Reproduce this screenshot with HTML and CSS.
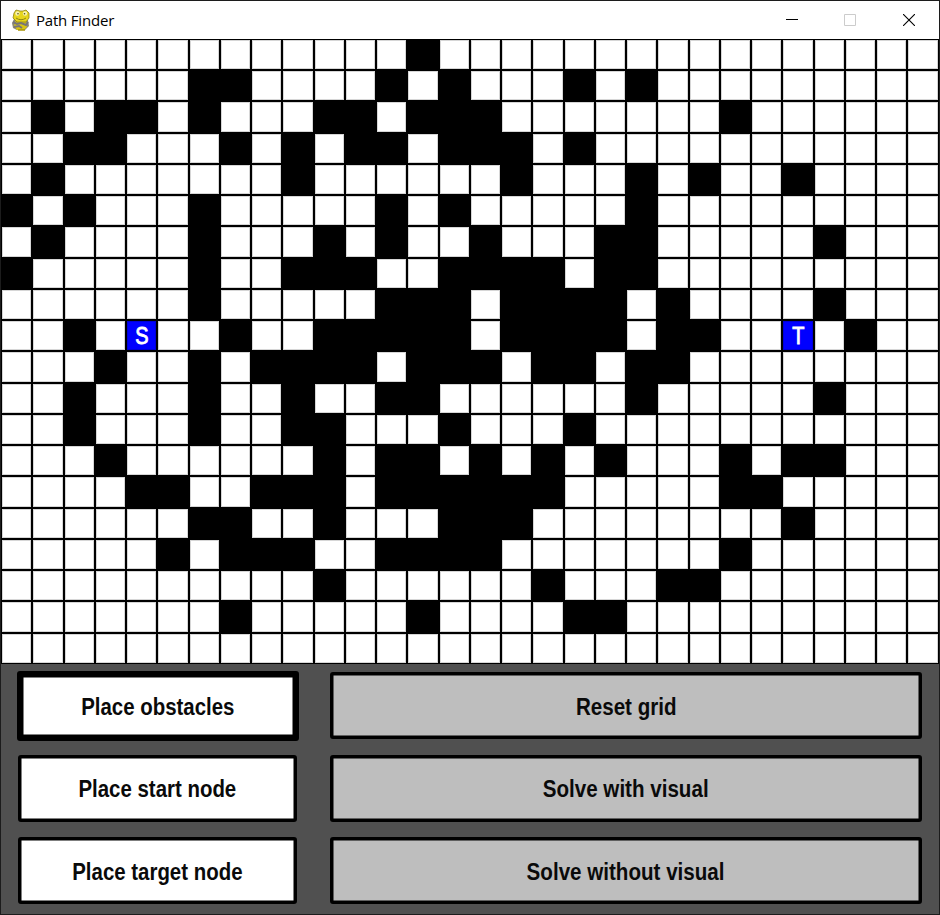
FILE: index.html
```
<!DOCTYPE html>
<html lang="en">
<head>
<meta charset="utf-8">
<title>Path Finder</title>
<link rel="stylesheet" href="styles.css">
</head>
<body>
<div class="window">
  <header class="titlebar">
    <svg class="logo" viewBox="0 0 20 22" width="20" height="22">
      <path d="M3 10 1 14l1 5 4 2h8l4-4-1-6z" fill="#8b8878"/>
      <path d="M5 10h10l1 8-3 3H6l-3-4z" fill="#d8c414"/>
      <path d="M3 4 5 1l4 1h3l3-1 3 3v5l-3 4H6L2 9z" fill="#e6d51c" stroke="#8f8418" stroke-width=".8"/>
      <circle cx="6.5" cy="4.5" r="2.2" fill="#f6f2b4"/>
      <circle cx="14" cy="4.5" r="2.2" fill="#f6f2b4"/>
      <circle cx="7" cy="4.8" r=".8" fill="#554d10"/>
      <circle cx="13.5" cy="4.8" r=".8" fill="#554d10"/>
      <path d="M5 9q5 3.500 10 0" fill="none" stroke="#8f8418"/>
      <path d="M2 13l4 2 4-1 5 2 2-3M3 18l5-1 3 2" fill="none" stroke="#77757a" stroke-width="2"/>
      <path d="M7 21h7" stroke="#a89306" stroke-width="1.500"/>
    </svg>
    <h1 class="title">Path Finder</h1>
    <div class="controls">
      <svg viewBox="0 0 12 12" width="12" height="12"><path d="M0 5.500h12" stroke="#000"/></svg>
      <svg viewBox="0 0 12 12" width="12" height="12"><path d="M.5.5h11v11H.5z" fill="none" stroke="#ccc"/></svg>
      <svg viewBox="0 0 12 12" width="12" height="12"><path d="M0 0l12 12M12 0 0 12" stroke="#000" stroke-width="1.100"/></svg>
    </div>
  </header>
  <main class="board" id="board"></main>
  <section class="panel">
    <button class="btn mode selected"><span>Place obstacles</span></button>
    <button class="btn"><span>Reset grid</span></button>
    <button class="btn mode"><span>Place start node</span></button>
    <button class="btn"><span>Solve with visual</span></button>
    <button class="btn mode"><span>Place target node</span></button>
    <button class="btn"><span>Solve without visual</span></button>
  </section>
</div>
<script src="grid.js"></script>
</body>
</html>
```
FILE: styles.css
```
* { box-sizing: border-box; }
body { margin: 0; background: #1c1c1c; }
.window {
  width: 940px;
  height: 915px;
  border: 1px solid #1c1c1c;
  background: #505050;
  overflow: hidden;
}
.titlebar {
  height: 37.9px;
  background: #fff;
  display: flex;
  align-items: center;
  padding: 0 24.5px 0 10px;
}
.logo { display: block; }
.title {
  margin: 0 0 0 5px;
  font: 400 15px/20px "Open Sans", "Noto Sans", sans-serif;
  letter-spacing: -.2px;
  color: #000;
}
.controls {
  margin-left: auto;
  display: flex;
  gap: 46.5px;
}
.controls svg { display: block; }
.board {
  width: 937.5px;
  height: 625px;
  display: grid;
  grid-template-columns: repeat(30, 31.25px);
  grid-template-rows: repeat(20, 31.25px);
  background: #000;
}
.cell {
  background: #fff;
  border: 1px solid #000;
  box-shadow: inset 0 0 0 1px rgba(0, 0, 0, .16);
}
.wall { background: #000; }
.node {
  display: flex;
  align-items: center;
  justify-content: center;
  background: #00f;
  color: #fff;
  font: 400 24px/29px "Liberation Sans", sans-serif;
  -webkit-text-stroke: .9px #fff;
}
.node span { transform: scaleX(.83); }
.panel {
  display: grid;
  grid-template-columns: 279px 592px;
  grid-template-rows: repeat(3, 67px);
  column-gap: 33px;
  row-gap: 15.6px;
  padding: 8.2px 0 0 17px;
}
.btn {
  display: flex;
  align-items: center;
  justify-content: center;
  padding: 0;
  border: 3px solid #000;
  border-radius: 3px;
  background: #bebebe;
  box-shadow: inset 0 0 0 .5px #000;
  color: #0a0a0a;
  font: 700 23px/26px "Liberation Sans", sans-serif;
}
.btn span { transform: translateY(.5px) scaleX(.895); white-space: nowrap; }
.mode { background: #fff; }
.mode span { transform: translate(-.5px, .5px) scaleX(.888); }
.selected { border-width: 6px; margin: -1px -2px -2px -1px; }
```
FILE: grid.js
```
// One string per row: "#" wall, "." free, "S" start, "T" target.
const rows = [
  ".............#................",
  "......##....#.#...#.#.........",
  ".#.##.#...##.###.......#......",
  "..##...#.#.##.###.#...........",
  ".#.......#......#...#.#..#....",
  "#.#...#.....#.#.....#.........",
  ".#....#...#.#..#...##.....#...",
  "#.....#..###..####.##.........",
  "......#.....###.####.#....#...",
  "..#.S..#..#####.####.##..T.#..",
  "...#..#.####.###.##.##........",
  "..#...#..#..##......#.....#...",
  "..#...#..##...#...#...........",
  "...#......#.##.#.#.#...#.##...",
  "....##..###.######.....##.....",
  "......##..#...###........#....",
  ".....#.###..####.......#......",
  "..........#......#...##.......",
  ".......#.....#....##..........",
  ".............................."
];
const board = document.getElementById("board");
for (const row of rows) {
  for (const ch of row) {
    const cell = document.createElement("div");
    cell.className = "cell";
    if (ch === "#") cell.classList.add("wall");
    if (ch === "S" || ch === "T") {
      cell.classList.add("node");
      const label = document.createElement("span");
      label.textContent = ch;
      cell.appendChild(label);
    }
    board.appendChild(cell);
  }
}
```
